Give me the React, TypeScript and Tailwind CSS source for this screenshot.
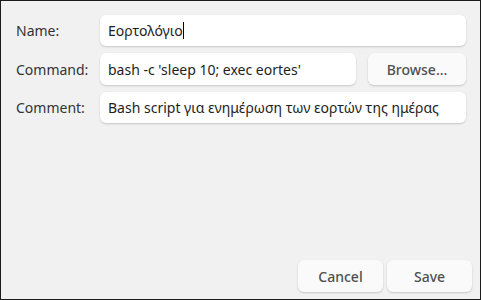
const fieldCls =
  "h-[31px] bg-white rounded-md shadow-[0_1px_2px_rgba(0,0,0,0.18)] flex items-center px-2 text-[14px] text-[#1e1e1e] whitespace-nowrap overflow-hidden";
const btnCls =
  "h-[32px] bg-[#fafafa] rounded-md shadow-[0_1px_2px_rgba(0,0,0,0.18)] flex items-center justify-center text-[14px] font-medium text-[#505050]";

const App = () => {
  return (
    <div
      className="w-[481px] h-[300px] bg-[#f1f1f1] border border-[#1c1c1c] flex flex-col"
      style={{ fontFamily: '"Noto Sans", "Open Sans", sans-serif' }}
    >
      <div className="pt-[14px] pl-[15px] pr-[14px] flex flex-col gap-[7px]">
        <div className="flex items-center">
          <div className="w-[84px] text-[14px] text-[#333]">Name:</div>
          <div className={fieldCls + " flex-1"}>
            Εορτολόγιο
            <span className="inline-block w-px h-[17px] bg-black" />
          </div>
        </div>
        <div className="flex items-center">
          <div className="w-[84px] text-[14px] text-[#333]">Command:</div>
          <div className={fieldCls + " h-[32px] flex-1"}>
            bash -c 'sleep 10; exec eortes'
          </div>
          <div className={btnCls + " w-[98px] ml-[12px]"}>Browse...</div>
        </div>
        <div className="flex items-center">
          <div className="w-[84px] text-[14px] text-[#333]">Comment:</div>
          <div className={fieldCls + " flex-1"}>
            Bash script για ενημέρωση των εορτών της ημέρας
          </div>
        </div>
      </div>
      <div className="mt-auto flex justify-end gap-[4px] pr-[8px] pb-[7px]">
        <div className={btnCls + " w-[85px]"}>Cancel</div>
        <div className={btnCls + " w-[85px]"}>Save</div>
      </div>
    </div>
  );
};

export default App;
